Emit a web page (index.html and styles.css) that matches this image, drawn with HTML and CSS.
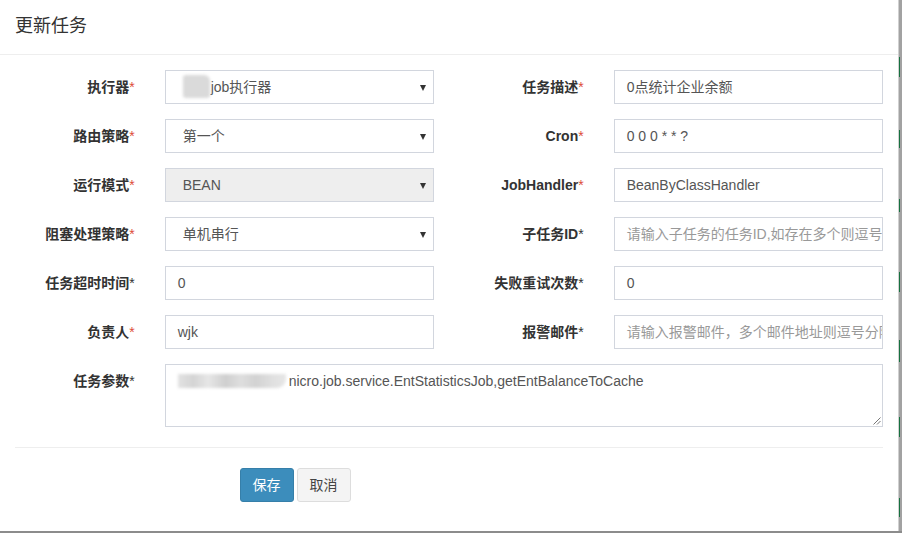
FILE: index.html
```html
<!DOCTYPE html>
<html lang="zh-CN">
<head>
<meta charset="utf-8">
<title>更新任务</title>
<link rel="stylesheet" href="styles.css">
</head>
<body>
<div class="screen">
  <div class="modal">
    <div class="modal-header">
      <h4 class="modal-title">更新任务</h4>
    </div>
    <div class="modal-body">
      <div class="form-row">
        <label class="ctl-label">执行器<span class="req">*</span></label>
        <div class="cell"><div class="form-control select"><span class="blur blur-small"></span>job执行器</div></div>
        <label class="ctl-label">任务描述<span class="req">*</span></label>
        <div class="cell"><div class="form-control">0点统计企业余额</div></div>
      </div>
      <div class="form-row">
        <label class="ctl-label">路由策略<span class="req">*</span></label>
        <div class="cell"><div class="form-control select">第一个</div></div>
        <label class="ctl-label">Cron<span class="req">*</span></label>
        <div class="cell"><div class="form-control">0 0 0 * * ?</div></div>
      </div>
      <div class="form-row">
        <label class="ctl-label">运行模式<span class="req">*</span></label>
        <div class="cell"><div class="form-control select disabled">BEAN</div></div>
        <label class="ctl-label">JobHandler<span class="req">*</span></label>
        <div class="cell"><div class="form-control">BeanByClassHandler</div></div>
      </div>
      <div class="form-row">
        <label class="ctl-label">阻塞处理策略<span class="req">*</span></label>
        <div class="cell"><div class="form-control select">单机串行</div></div>
        <label class="ctl-label">子任务ID<span class="req dark">*</span></label>
        <div class="cell"><div class="form-control placeholder">请输入子任务的任务ID,如存在多个则逗号分隔</div></div>
      </div>
      <div class="form-row">
        <label class="ctl-label">任务超时时间<span class="req dark">*</span></label>
        <div class="cell"><div class="form-control">0</div></div>
        <label class="ctl-label">失败重试次数<span class="req dark">*</span></label>
        <div class="cell"><div class="form-control">0</div></div>
      </div>
      <div class="form-row">
        <label class="ctl-label">负责人<span class="req">*</span></label>
        <div class="cell"><div class="form-control">wjk</div></div>
        <label class="ctl-label">报警邮件<span class="req dark">*</span></label>
        <div class="cell"><div class="form-control placeholder">请输入报警邮件，多个邮件地址则逗号分隔</div></div>
      </div>
      <div class="form-row wide">
        <label class="ctl-label">任务参数<span class="req dark">*</span></label>
        <div class="cell span3">
          <div class="form-control textarea"><span class="blur blur-long"></span>nicro.job.service.EntStatisticsJob,getEntBalanceToCache<svg class="grip" width="9" height="9" viewBox="0 0 9 9"><path d="M8.5 1.5 L1.5 8.5 M8.5 5 L5 8.5" stroke="#777" stroke-width="1" fill="none"/></svg></div>
        </div>
      </div>
      <hr class="divider">
      <div class="btn-row">
        <div class="btn-cell">
          <button class="btn btn-primary">保存</button>
          <button class="btn btn-default">取消</button>
        </div>
      </div>
    </div>
  </div>
  <div class="backdrop">
    <div class="bd-line"></div>
    <div class="bd-green"></div>
    <div class="bd-gray"></div>
  </div>
</div>
<div class="bottom-strip"></div>
</body>
</html>
```

FILE: styles.css
```css
html, body {
  margin: 0;
  padding: 0;
}
body {
  width: 902px;
  height: 533px;
  overflow: hidden;
  background: #a2a2a2;
  font-family: "Liberation Sans", "Noto Sans CJK SC", sans-serif;
  font-size: 14px;
  color: #333;
}
.screen {
  display: flex;
  height: 531px;
}
.modal {
  width: 898px;
  height: 531px;
  background: #fff;
  flex: none;
}
.modal-header {
  padding: 15px 15px 16px;
  border-bottom: 1px solid #eeeeee;
}
.modal-title {
  margin: 0;
  font-size: 18px;
  font-weight: normal;
  line-height: 23px;
  color: #333;
}
.modal-body {
  padding: 15px 15px 15px;
}
.form-row {
  display: grid;
  grid-template-columns: 2fr 4fr 2fr 4fr;
  margin: 0 -15px 15px;
}
.form-row.wide {
  margin-bottom: 20px;
}
.ctl-label {
  padding: 7px 15px 0;
  text-align: right;
  font-weight: bold;
  line-height: 20px;
  color: #333;
  white-space: nowrap;
}
.req {
  color: #dd4b39;
  font-weight: normal;
}
.req.dark {
  color: #333;
}
.cell {
  padding: 0 15px;
  min-width: 0;
}
.span3 {
  grid-column: 2 / span 3;
}
.form-control {
  position: relative;
  box-sizing: border-box;
  height: 34px;
  padding: 6px 4px 6px 12px;
  border: 1px solid #d2d6de;
  line-height: 20px;
  font-size: 14px;
  color: #555;
  background: #fff;
  white-space: nowrap;
  overflow: hidden;
}
.form-control.select {
  padding-left: 17px;
}
.form-control.select::after {
  content: "";
  position: absolute;
  right: 7px;
  top: 14px;
  border-left: 3px solid transparent;
  border-right: 3px solid transparent;
  border-top: 6px solid #333;
}
.form-control.disabled {
  background: #eeeeee;
}
.form-control.placeholder {
  color: #999;
  padding-right: 3px;
}
.form-control.textarea {
  height: 63px;
  white-space: normal;
}
.grip {
  position: absolute;
  right: 1px;
  bottom: 1px;
}
.blur {
  display: inline-block;
  vertical-align: middle;
  filter: blur(1.5px);
}
.blur-small {
  width: 27px;
  height: 23px;
  margin: -3px 1px 0 0;
  background: #dadada;
  border-radius: 3px 6px 3px 3px;
}
.blur-long {
  width: 108px;
  height: 14px;
  margin: -3px 3px 0 0;
  background: linear-gradient(to right, #e2e2e2 0, #d4d4d4 14%, #e6e6e6 28%, #cfcfcf 44%, #dedede 58%, #d2d2d2 72%, #e0e0e0 88%, #e6e6e6 100%);
  border-radius: 0 0 9px 0;
}
.divider {
  margin: 0 0 20px;
  border: 0;
  border-top: 1px solid #eeeeee;
  height: 0;
}
.btn-row {
  display: grid;
  grid-template-columns: 1fr 3fr;
  margin: 0 -15px 15px;
}
.btn-cell {
  grid-column: 2;
  padding: 0 15px;
  display: flex;
  gap: 3px;
}
.btn {
  box-sizing: border-box;
  height: 34px;
  padding: 6px 12px;
  font-family: "Liberation Sans", "Noto Sans CJK SC", sans-serif;
  font-size: 14px;
  line-height: 20px;
  border: 1px solid transparent;
  border-radius: 3px;
}
.btn-primary {
  background: #3c8dbc;
  border-color: #367fa9;
  color: #fff;
}
.btn-default {
  background: #f4f4f4;
  border-color: #ddd;
  color: #444;
}
.backdrop {
  flex: 1;
  display: flex;
}
.bd-line {
  width: 1px;
  background: #d0d0d0;
}
.bd-green {
  width: 1px;
  background: linear-gradient(to bottom,
    #a2a2a2 0, #a2a2a2 57px, #17703f 57px, #17703f 77px,
    #a2a2a2 77px, #a2a2a2 130px, #17703f 130px, #17703f 148px,
    #a2a2a2 148px, #a2a2a2 199px, #17703f 199px, #17703f 212px,
    #a2a2a2 212px, #a2a2a2 272px, #17703f 272px, #17703f 292px,
    #a2a2a2 292px, #a2a2a2 340px, #17703f 340px, #17703f 362px,
    #a2a2a2 362px, #a2a2a2 417px, #17703f 417px, #17703f 437px,
    #a2a2a2 437px, #a2a2a2 498px, #17703f 498px, #17703f 517px,
    #a2a2a2 517px);
}
.bd-gray {
  flex: 1;
  background: #a2a2a2;
}
.bottom-strip {
  height: 2px;
  background: #8c8c8c;
}
```
